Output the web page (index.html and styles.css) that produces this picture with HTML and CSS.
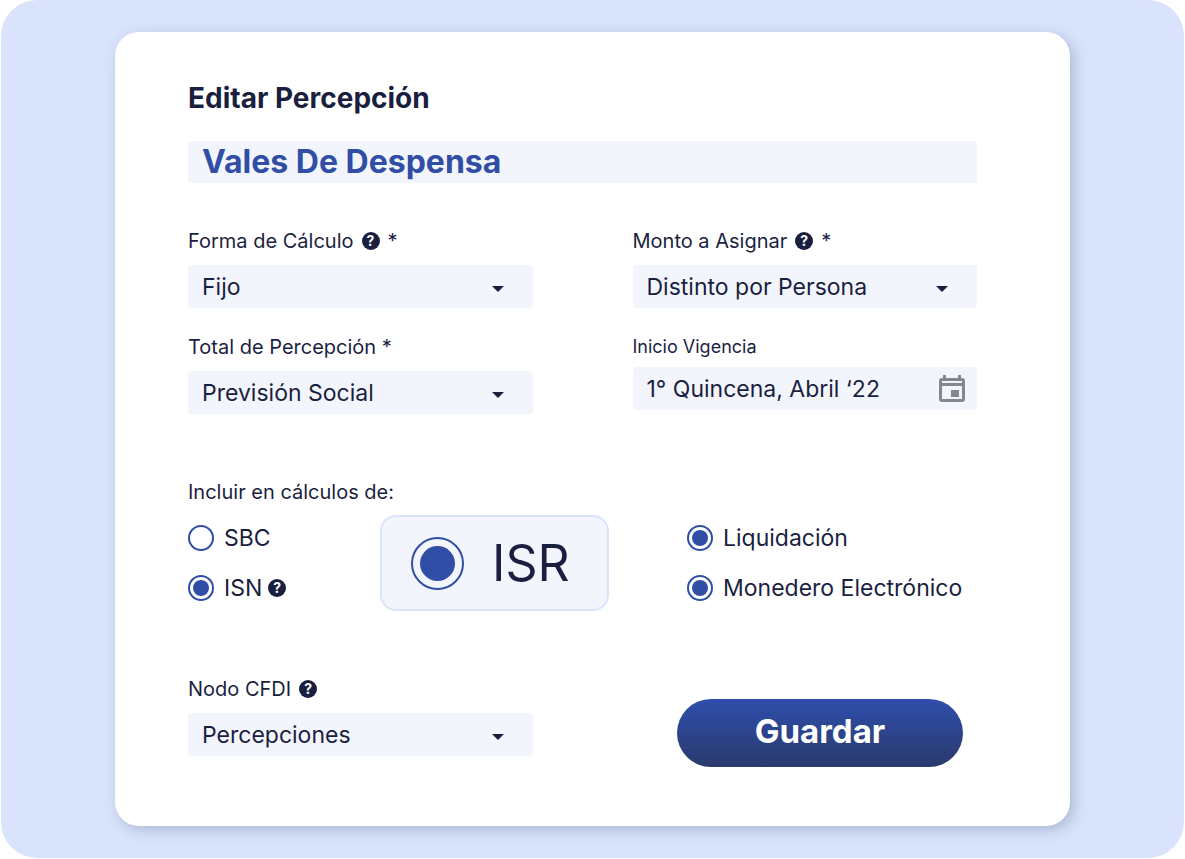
FILE: index.html
```html
<!DOCTYPE html>
<html lang="es">
<head>
  <meta charset="utf-8">
  <meta name="viewport" content="width=device-width, initial-scale=1.0">
  <title>Editar Percepción</title>
  <link rel="stylesheet" href="styles.css">
</head>
<body>
  <main class="page">
    <form class="card">
      <h1><label for="nombre">Editar Percepción</label></h1>
      <input class="name-input" id="nombre" type="text" value="Vales De Despensa">

      <div class="columns fields">
        <div class="column">
          <div class="field">
            <div class="field-label">
              <label for="forma">Forma de Cálculo</label>
              <span class="help">?</span>
              <span>*</span>
            </div>
            <div class="select">
              <select id="forma"><option>Fijo</option></select>
              <svg class="arrow" viewBox="0 0 14 8"><path d="M1 1h12L7 7z"/></svg>
            </div>
          </div>
          <div class="field">
            <div class="field-label">
              <label for="total">Total de Percepción *</label>
            </div>
            <div class="select">
              <select id="total"><option>Previsión Social</option></select>
              <svg class="arrow" viewBox="0 0 14 8"><path d="M1 1h12L7 7z"/></svg>
            </div>
          </div>
        </div>

        <div class="column">
          <div class="field">
            <div class="field-label">
              <label for="monto">Monto a Asignar</label>
              <span class="help">?</span>
              <span>*</span>
            </div>
            <div class="select">
              <select id="monto"><option>Distinto por Persona</option></select>
              <svg class="arrow" viewBox="0 0 14 8"><path d="M1 1h12L7 7z"/></svg>
            </div>
          </div>
          <div class="field field-date">
            <div class="field-label">
              <label for="inicio">Inicio Vigencia</label>
            </div>
            <div class="select">
              <input id="inicio" type="text" value="1° Quincena, Abril ‘22">
              <svg class="calendar" viewBox="0 0 26 28">
                <path d="M4 0h3v3h12V0h3v3h1a3 3 0 0 1 3 3v18a3 3 0 0 1-3 3H3a3 3 0 0 1-3-3V6a3 3 0 0 1 3-3h1zM3 6v2h20V6zM3 11v13h20V11zM12 15h8v7h-8z" fill-rule="evenodd"/>
              </svg>
            </div>
          </div>
        </div>
      </div>

      <div class="include" role="group" aria-labelledby="incluir">
        <p id="incluir">Incluir en cálculos de:</p>
        <div class="options">
          <div class="option-list">
            <label class="option"><input type="radio" name="sbc">SBC</label>
            <div class="option-row">
              <label class="option"><input type="radio" name="isn" checked>ISN</label>
              <span class="help">?</span>
            </div>
          </div>
          <label class="option option-big"><input type="radio" name="isr" checked>ISR</label>
          <div class="option-list">
            <label class="option"><input type="radio" name="liquidacion" checked>Liquidación</label>
            <label class="option"><input type="radio" name="monedero" checked>Monedero Electrónico</label>
          </div>
        </div>
      </div>

      <div class="columns footer">
        <div class="field">
          <div class="field-label">
            <label for="nodo">Nodo CFDI</label>
            <span class="help">?</span>
          </div>
          <div class="select">
            <select id="nodo"><option>Percepciones</option></select>
            <svg class="arrow" viewBox="0 0 14 8"><path d="M1 1h12L7 7z"/></svg>
          </div>
        </div>
        <button class="save" type="button">Guardar</button>
      </div>
    </form>
  </main>
</body>
</html>
```
FILE: styles.css
```css
* {
  box-sizing: border-box;
}
body {
  margin: 0;
  background-color: #fff;
  color: #1b1f3f;
  font-family: Inter, sans-serif;
  font-size: 20px;
  line-height: 24px;
}
.page {
  margin: 0 1px;
  padding: 32px 114px;
  background-color: #d9e3fb;
  border-radius: 36px;
}
.card {
  padding: 48px 93px 59px 73px;
  background-color: #fff;
  border-radius: 24px;
  box-shadow: 4px 4px 14px rgba(70, 85, 130, 0.3);
}
h1 {
  margin: 0 0 25px;
  font-size: 28px;
  font-weight: 700;
  line-height: 36px;
}
input,
select,
button {
  margin: 0;
  border: 0;
  color: inherit;
  font-family: inherit;
}
.name-input {
  display: block;
  width: 100%;
  height: 42px;
  padding: 0 14px 2px;
  background-color: #f3f5fd;
  border-radius: 4px;
  color: #304ea5;
  font-size: 32px;
  font-weight: 700;
}

/* Fields */
.columns {
  display: grid;
  grid-template-columns: 1fr 1fr;
  column-gap: 100px;
}
.fields {
  margin-top: 46px;
}
.column {
  display: flex;
  flex-direction: column;
  gap: 27px;
}
.field {
  display: flex;
  flex-direction: column;
  gap: 12px;
}
.field-date {
  gap: 8px;
}
.field-date .field-label {
  font-size: 18px;
}
.field-label {
  display: flex;
  align-items: center;
  gap: 8px;
}
.help {
  width: 18px;
  height: 18px;
  border-radius: 50%;
  background-color: #1b1f3f;
  color: #fff;
  font-size: 14px;
  font-weight: 700;
  line-height: 18px;
  text-align: center;
}
.select {
  position: relative;
}
.select select,
.select input {
  display: block;
  width: 100%;
  height: 43px;
  padding: 0 14px;
  appearance: none;
  background-color: #f3f5fd;
  border-radius: 4px;
  font-size: 23px;
}
.arrow {
  position: absolute;
  top: 20px;
  right: 28px;
  width: 14px;
  height: 8px;
  fill: #1b1f3f;
  pointer-events: none;
}
.calendar {
  position: absolute;
  top: 8px;
  right: 12px;
  width: 26px;
  height: 28px;
  fill: #85868f;
}

/* Options */
.include {
  margin-top: 66px;
}
.include p {
  margin: 0 0 11px;
}
.options {
  display: grid;
  grid-template-columns: 192px 229px 1fr;
}
.option-list {
  display: flex;
  flex-direction: column;
  gap: 22px;
  padding-top: 9px;
}
.option-list:last-child {
  padding-left: 78px;
}
.option-row {
  display: flex;
  align-items: center;
  gap: 6px;
}
.option {
  display: flex;
  align-items: center;
  gap: 10px;
  font-size: 23px;
  line-height: 28px;
  white-space: nowrap;
}
.option input {
  width: 26px;
  height: 26px;
  appearance: none;
  border: 2px solid #304ea5;
  border-radius: 50%;
  background-color: #fff;
}
.option input:checked {
  padding: 3px;
  background: #304ea5 content-box;
}
.option-big {
  gap: 28px;
  height: 96px;
  padding-left: 29px;
  background-color: #f3f5fd;
  border: 2px solid #d9e3fb;
  border-radius: 16px;
  font-size: 50px;
}
.option-big input {
  width: 53px;
  height: 53px;
}
.option-big input:checked {
  padding: 7px;
}

/* Footer */
.footer {
  margin-top: 66px;
}
.save {
  justify-self: end;
  align-self: start;
  width: 286px;
  height: 68px;
  margin: 22px 14px 0 0;
  padding: 0 0 4px;
  background: linear-gradient(#2f4eac, #2a3a6c);
  border-radius: 34px;
  color: #fff;
  font-size: 33px;
  font-weight: 700;
}
```
